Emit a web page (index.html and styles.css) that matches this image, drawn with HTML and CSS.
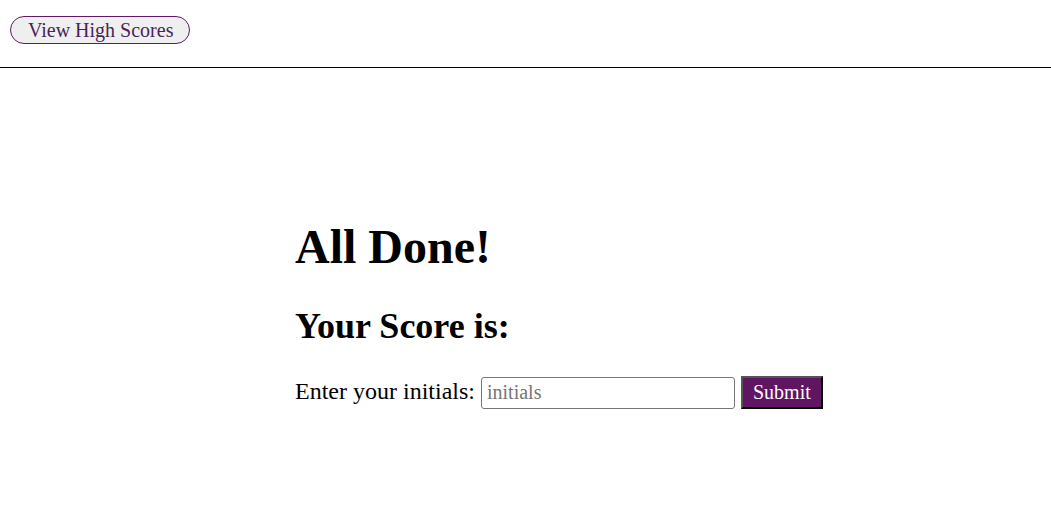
FILE: index.html
```html
<!DOCTYPE html>
<html lang="en">
<head>
<meta charset="utf-8">
<title>Quiz</title>
<link rel="stylesheet" href="styles.css">
</head>
<body>
<header class="topbar">
  <button class="scores-btn" type="button">View High Scores</button>
</header>
<main class="panel">
  <h1 class="title">All Done!</h1>
  <h2 class="score">Your Score is:</h2>
  <form class="entry">
    <label class="entry-label" for="initials">Enter your initials:</label> <input id="initials" class="entry-input" type="text" placeholder="initials"> <button class="submit-btn" type="button">Submit</button>
  </form>
</main>
</body>
</html>
```
FILE: styles.css
```css
html, body {
  margin: 0;
  padding: 0;
  background: #ffffff;
}

body {
  font-family: "Liberation Serif", "Times New Roman", serif;
  font-size: 24px;
  color: #000;
}

.topbar {
  height: 68px;
  border-bottom: 1px solid #000;
  padding: 16px 0 0 10px;
  box-sizing: border-box;
}

.scores-btn {
  font-family: "Liberation Serif", "Times New Roman", serif;
  font-size: 20px;
  line-height: 24px;
  height: 28px;
  padding: 1px 16px 1px 17px;
  margin: 0;
  border: 1px solid #5e1a66;
  border-radius: 14px;
  background: #efefef;
  color: #4a2458;
  box-sizing: border-box;
}

.panel {
  width: 461px;
  margin: 0 auto;
  padding-top: 151px;
  white-space: nowrap;
}

.title {
  font-size: 48px;
  margin: 0 0 32px;
  line-height: 55px;
}

.score {
  font-size: 36px;
  margin: 0 0 29px;
  line-height: 41px;
}

.entry {
  margin: 0;
  font-size: 24px;
}

.entry-input {
  font-family: "Liberation Serif", "Times New Roman", serif;
  font-size: 20px;
  width: 254px;
  height: 32px;
  box-sizing: border-box;
  border: 1px solid #767676;
  border-radius: 3px;
  padding: 0 5px;
  margin: 0;
  color: #000;
}

.entry-input::placeholder {
  color: #757575;
}

.submit-btn {
  font-family: "Liberation Serif", "Times New Roman", serif;
  font-size: 20px;
  line-height: 23px;
  height: 33px;
  padding: 3px 10px;
  margin: 0;
  box-sizing: border-box;
  background: #601563;
  color: #fff;
  border: 2px solid;
  border-color: #555 #000 #000 #555;
}
```
